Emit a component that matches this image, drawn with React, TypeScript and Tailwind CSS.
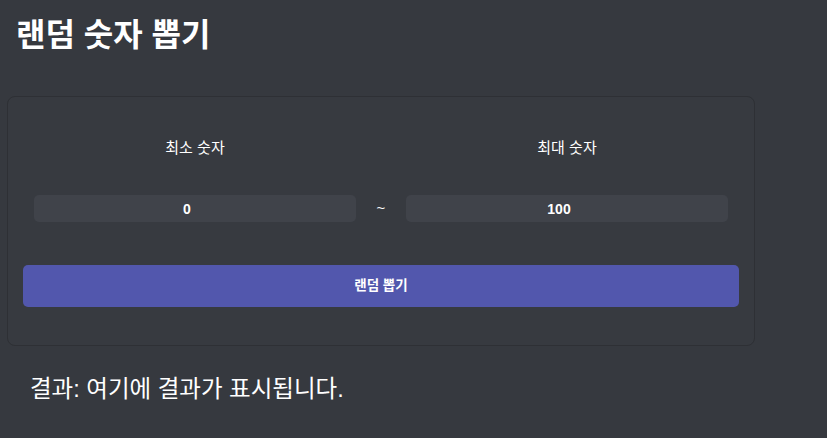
import React from "react";

export default function App() {
  const font = { fontFamily: '"Liberation Sans", "Noto Sans CJK KR", sans-serif' };
  return (
    <div className="min-h-screen w-full bg-[#36393f] text-white" style={font}>
      <h1 className="pl-4 pt-[17px] text-[32px] leading-[36px] font-bold text-white">랜덤 숫자 뽑기</h1>
      <div className="ml-[7px] mt-[43px] w-[748px] rounded-lg border border-[#2e3035] bg-[#373a40] px-[15px] pt-[40px] pb-[38px]">
        <div className="mx-[11px] grid grid-cols-[322px_50px_322px]">
          <div className="text-center text-[15px] leading-[22px]">최소 숫자</div>
          <div />
          <div className="text-center text-[15px] leading-[22px]">최대 숫자</div>
          <input
            readOnly
            value="0"
            className="mt-[36px] h-[27px] rounded-[5px] bg-[#40434a] pr-4 text-center text-[14px] font-bold text-white outline-none"
            style={font}
          />
          <div className="mt-[36px] flex h-[27px] items-center justify-center text-[15px]">~</div>
          <input
            readOnly
            value="100"
            className="mt-[36px] h-[27px] rounded-[5px] bg-[#40434a] pr-4 text-center text-[14px] font-bold text-white outline-none"
            style={font}
          />
        </div>
        <button
          className="mt-[43px] flex h-[42px] w-full items-center justify-center rounded-[5px] bg-[#5257ad] text-[13.5px] font-bold text-white"
          style={font}
        >
          랜덤 뽑기
        </button>
      </div>
      <p className="pl-[30px] pt-[28px] text-[23.5px] leading-[30px]">결과: 여기에 결과가 표시됩니다.</p>
    </div>
  );
}
